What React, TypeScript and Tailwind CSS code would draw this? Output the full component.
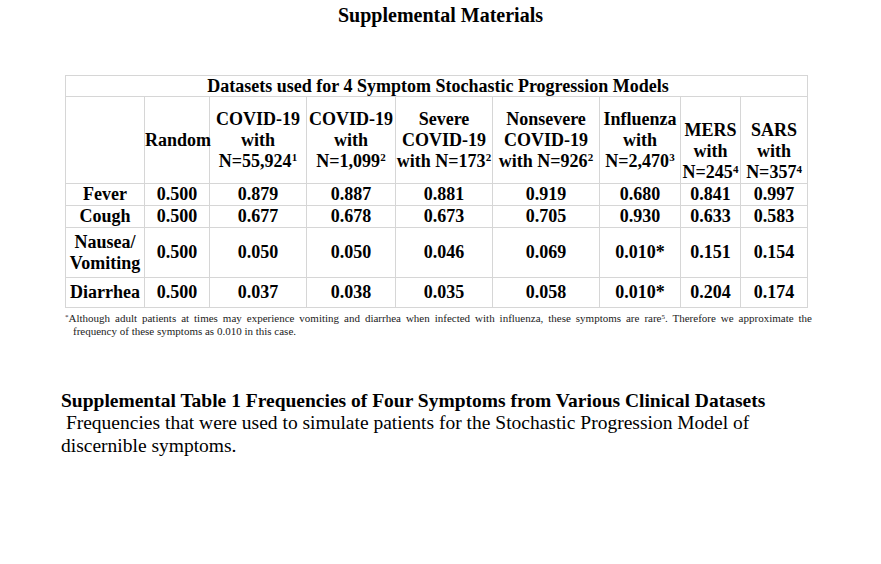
const serif = { fontFamily: '"Liberation Serif", "Times New Roman", serif' };

const cols = [79, 65, 97, 89, 97, 107, 81, 60, 67];

const rows: { label: React.ReactNode; values: string[]; h: string }[] = [
  { label: 'Fever', values: ['0.500', '0.879', '0.887', '0.881', '0.919', '0.680', '0.841', '0.997'], h: 'h-[21px]' },
  { label: 'Cough', values: ['0.500', '0.677', '0.678', '0.673', '0.705', '0.930', '0.633', '0.583'], h: 'h-[22px]' },
  {
    label: (
      <>
        Nausea/
        <br />
        Vomiting
      </>
    ),
    values: ['0.500', '0.050', '0.050', '0.046', '0.069', '0.010*', '0.151', '0.154'],
    h: 'h-[50px]',
  },
  { label: 'Diarrhea', values: ['0.500', '0.037', '0.038', '0.035', '0.058', '0.010*', '0.204', '0.174'], h: 'h-[30px]' },
];

function Sup({ children }: { children: React.ReactNode }) {
  return <sup className="text-[11px]">{children}</sup>;
}

export default function App() {
  const cell = 'border border-[#d6d6d6] p-0 text-center whitespace-nowrap';
  return (
    <div className="w-[881px] h-[564px] bg-white text-black overflow-hidden" style={serif}>
      <h1 className="pt-[3px] text-center text-[20px] font-bold leading-[24px]">Supplemental Materials</h1>

      <div className="mt-[48px] ml-[65px]">
        <table className="w-[742px] border-collapse table-fixed text-[18px] font-bold leading-[21px]">
          <colgroup>
            {cols.map((w, i) => (
              <col key={i} style={{ width: w }} />
            ))}
          </colgroup>
          <tbody>
            <tr className="h-[21px]">
              <td colSpan={9} className={`${cell} leading-[20px]`}>
                <span className="pl-[3px]">Datasets used for 4 Symptom Stochastic Progression Models</span>
              </td>
            </tr>
            <tr className="h-[87px]">
              <td className={cell}></td>
              <td className={cell}>Random</td>
              <td className={cell}>
                COVID-19
                <br />
                with
                <br />
                N=55,924<Sup>1</Sup>
              </td>
              <td className={cell}>
                COVID-19
                <br />
                with
                <br />
                N=1,099<Sup>2</Sup>
              </td>
              <td className={cell}>
                Severe
                <br />
                COVID-19
                <br />
                with N=173<Sup>2</Sup>
              </td>
              <td className={cell}>
                Nonsevere
                <br />
                COVID-19
                <br />
                with N=926<Sup>2</Sup>
              </td>
              <td className={cell}>
                Influenza
                <br />
                with
                <br />
                N=2,470<Sup>3</Sup>
              </td>
              <td className={`${cell} align-bottom`}>
                MERS
                <br />
                with
                <br />
                N=245<Sup>4</Sup>
              </td>
              <td className={`${cell} align-bottom`}>
                SARS
                <br />
                with
                <br />
                N=357<Sup>4</Sup>
              </td>
            </tr>
            {rows.map((r, i) => (
              <tr key={i} className={r.h}>
                <td className={cell}>{r.label}</td>
                {r.values.map((v, j) => (
                  <td key={j} className={cell}>
                    {v}
                  </td>
                ))}
              </tr>
            ))}
          </tbody>
        </table>

        <div className="mt-[4px] w-[747px] text-[11px] leading-[13px] text-[#222]">
          <p className="text-justify [text-align-last:justify]">
            <sup className="text-[7px]">*</sup>Although adult patients at times may experience vomiting and diarrhea when
            infected with influenza, these symptoms are rare<sup className="text-[7px]">5</sup>. Therefore we approximate the
          </p>
          <p className="pl-[8px]">frequency of these symptoms as 0.010 in this case.</p>
        </div>
      </div>

      <div className="mt-[52px] ml-[61px] text-[19.5px]">
        <p className="font-bold leading-[21px]">
          Supplemental Table 1 Frequencies of Four Symptoms from Various Clinical Datasets
        </p>
        <p className="leading-[23px]">
          &nbsp;Frequencies that were used to simulate patients for the Stochastic Progression Model of
          <br />
          discernible symptoms.
        </p>
      </div>
    </div>
  );
}
